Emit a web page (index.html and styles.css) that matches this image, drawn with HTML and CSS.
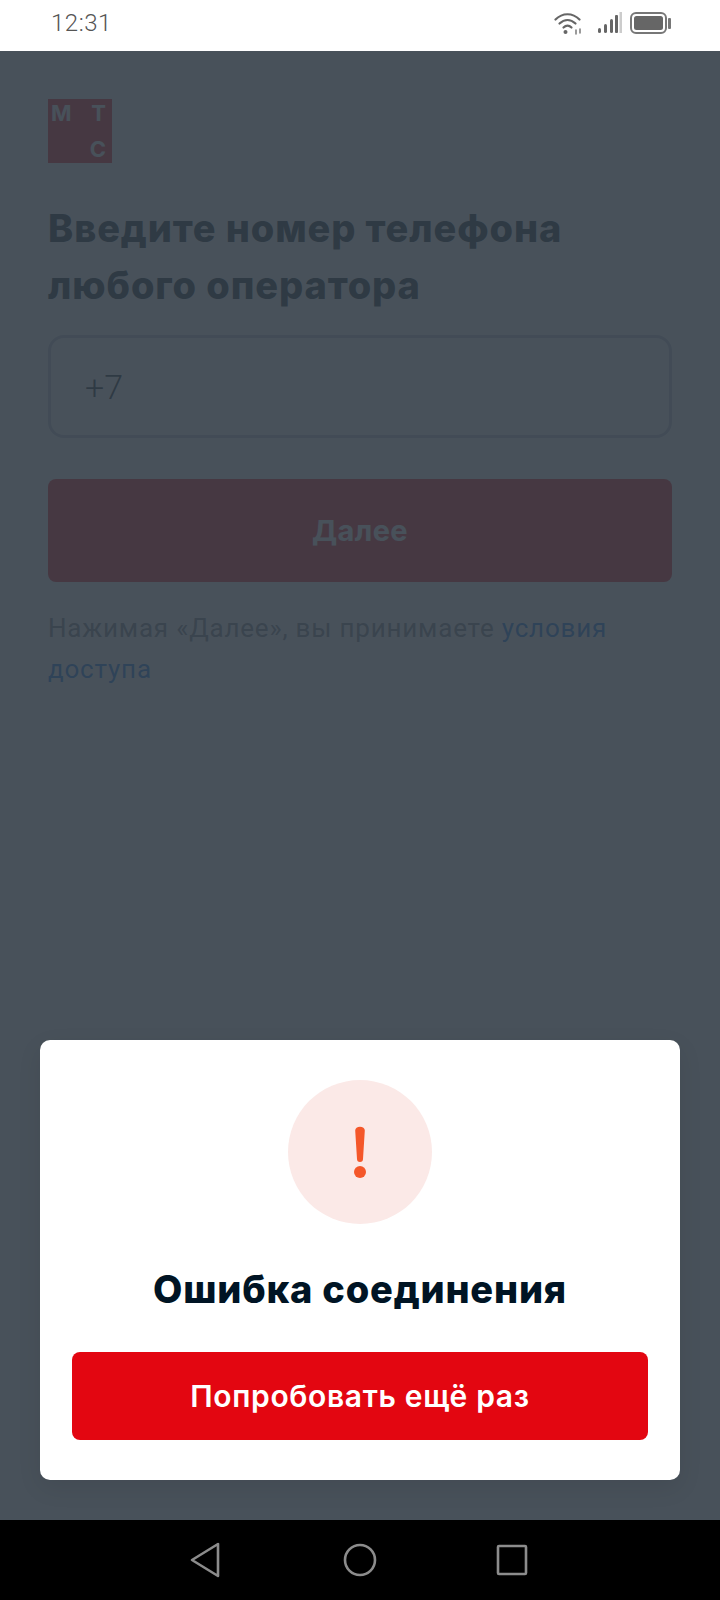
FILE: index.html
```html
<!DOCTYPE html>
<html lang="ru">
<head>
    <meta charset="UTF-8">
    <meta name="viewport" content="width=device-width, initial-scale=1.0">
    <title>Вход</title>
    <link rel="stylesheet" href="styles.css">
</head>
<body>
<div class="status-bar">
    <span class="status-time">12:31</span>
    <div class="status-icons">
        <svg class="icon-wifi" width="30" height="24" viewBox="0 0 30 24" fill="none" stroke="#666" stroke-width="2.2" stroke-linecap="round">
            <path d="M1.5 8.5C8.5 1.5 18.500 1.500 25.500 8.500"/>
            <path d="M5.500 12.500C10.500 7.800 16.500 7.800 21.500 12.500"/>
            <path d="M9.500 16.500C12 14 15 14 17.500 16.500"/>
            <circle cx="11.500" cy="21" r="2" fill="#666" stroke="none"/>
            <path d="M22 19v4M26 18v4" stroke-width="1.300"/>
        </svg>
        <svg class="icon-signal" width="24" height="22" viewBox="0 0 24 22">
            <rect x="0" y="16" width="3" height="5" rx="1.500" fill="#666"/>
            <rect x="6" y="12" width="3" height="9" rx="1.500" fill="#666"/>
            <rect x="12" y="7" width="3" height="14" rx="1.500" fill="#666"/>
            <rect x="17" y="3" width="3" height="18" rx="1" fill="#666"/>
            <rect x="21.500" y="0" width="2.500" height="21" fill="#ccc"/>
        </svg>
        <svg class="icon-battery" width="41" height="22" viewBox="0 0 41 22">
            <rect x="1" y="1" width="35" height="20" rx="5" fill="none" stroke="#777" stroke-width="2"/>
            <rect x="4" y="4" width="29" height="14" rx="2.500" fill="#666"/>
            <rect x="38" y="6" width="3" height="11" rx="1" fill="#777"/>
        </svg>
    </div>
</div>

<div class="screen">
    <main class="content">
        <div class="logo">
            <span>М</span><span>Т</span><span></span><span>С</span>
        </div>
        <h1 class="title">Введите номер телефона<br>любого оператора</h1>
        <div class="phone-input">+7</div>
        <button class="next-button" type="button">Далее</button>
        <p class="terms">Нажимая «Далее», вы принимаете <a href="#">условия</a> <a href="#">доступа</a></p>
    </main>

    <div class="overlay">
        <div class="modal">
            <div class="modal-icon">
                <svg width="16" height="52" viewBox="0 0 16 52">
                    <path d="M3.200 4.500a4.800 3.800 0 0 1 9.600 0L11 33a3 3 0 0 1-6 0z" fill="#f4572a"/>
                    <circle cx="8" cy="46" r="6" fill="#f4572a"/>
                </svg>
            </div>
            <h2 class="modal-title">Ошибка соединения</h2>
            <button class="retry-button" type="button">Попробовать ещё раз</button>
        </div>
    </div>
</div>

<div class="nav-bar">
    <svg width="32" height="36" viewBox="0 0 32 36" fill="none" stroke="#8c8c8c" stroke-width="2.600" stroke-linejoin="round">
        <path d="M29 2V34L3 18z"/>
    </svg>
    <svg width="34" height="34" viewBox="0 0 34 34" fill="none" stroke="#8c8c8c" stroke-width="2.600">
        <circle cx="17" cy="17" r="15"/>
    </svg>
    <svg class="nav-square" width="32" height="32" viewBox="0 0 32 32" fill="none" stroke="#8c8c8c" stroke-width="2.600" stroke-linejoin="round">
        <rect x="2" y="2" width="28" height="28" rx="1"/>
    </svg>
</div>
</body>
</html>
```

FILE: styles.css
```css
* {
    box-sizing: border-box;
}

body {
    margin: 0;
    height: 1600px;
    display: flex;
    flex-direction: column;
    font-family: Roboto, 'Liberation Sans', sans-serif;
    color: #001424;
    background: #fff;
}

.status-bar {
    height: 51px;
    flex-shrink: 0;
    display: flex;
    align-items: center;
    justify-content: space-between;
    padding: 0 49px 6px 51px;
    background: #fff;
}

.status-time {
    font-size: 24px;
    font-weight: 300;
    letter-spacing: 0.5px;
    color: #555;
}

.status-icons {
    display: flex;
    align-items: center;
}

.icon-wifi {
    margin-right: 14px;
}

.icon-signal {
    margin-right: 8px;
}

.screen {
    position: relative;
    flex: 1;
    overflow: hidden;
}

.content {
    padding: 48px 48px 0;
}

.logo {
    width: 64px;
    height: 64px;
    padding: 1px 6px 1px 3px;
    display: grid;
    grid-template-columns: 1fr 1fr;
    grid-template-rows: 1fr 1fr;
    background: #e30611;
    color: #fff;
    font-family: Inter, sans-serif;
    font-size: 22px;
    font-weight: 700;
    line-height: 26px;
}

.logo span:nth-child(even) {
    justify-self: end;
}

.logo span:nth-child(n+3) {
    align-self: end;
}

.title {
    margin: 37px 0 0;
    font-family: Inter, Roboto, sans-serif;
    font-size: 38px;
    font-weight: 800;
    letter-spacing: 0.9px;
    line-height: 57px;
}

.phone-input {
    height: 103px;
    margin-top: 21px;
    padding: 0 34px;
    display: flex;
    align-items: center;
    border: 3px solid #bcc3d0;
    border-radius: 16px;
    font-size: 34px;
    font-weight: 300;
}

.next-button {
    display: block;
    width: 100%;
    height: 103px;
    margin-top: 41px;
    border: none;
    border-radius: 8px;
    background: #e30611;
    color: #fff;
    font-family: Inter, Roboto, sans-serif;
    font-size: 29px;
    font-weight: 700;
    letter-spacing: 0.4px;
}

.terms {
    margin: 26px 0 0;
    font-size: 26px;
    letter-spacing: 0.8px;
    line-height: 41px;
    color: #6e7782;
}

.terms a {
    color: #0070e5;
    text-decoration: none;
}

.overlay {
    position: absolute;
    top: 0;
    right: 0;
    bottom: 0;
    left: 0;
    display: flex;
    align-items: flex-end;
    padding: 40px;
    background: rgba(52, 62, 72, 0.9);
}

.modal {
    width: 100%;
    height: 440px;
    padding: 40px 32px;
    display: flex;
    flex-direction: column;
    align-items: center;
    background: #fff;
    border-radius: 10px;
    box-shadow: 0 8px 24px rgba(0, 0, 0, 0.08);
}

.modal-icon {
    width: 144px;
    height: 144px;
    display: flex;
    align-items: center;
    justify-content: center;
    border-radius: 50%;
    background: #fbe9e7;
}

.modal-title {
    margin: 41px 0 0;
    font-family: Inter, Roboto, sans-serif;
    font-size: 38px;
    font-weight: 800;
    letter-spacing: 0.8px;
    line-height: 48px;
    color: #001424;
}

.retry-button {
    width: 100%;
    height: 88px;
    margin-top: auto;
    border: none;
    border-radius: 8px;
    background: #e30611;
    color: #fff;
    font-family: Inter, Roboto, sans-serif;
    font-size: 30px;
    font-weight: 600;
    letter-spacing: 0.65px;
}

.nav-bar {
    height: 80px;
    flex-shrink: 0;
    display: flex;
    align-items: center;
    justify-content: center;
    gap: 122px;
    padding-right: 3px;
    background: #000;
}

.nav-square {
    margin-left: -3px;
}
```
